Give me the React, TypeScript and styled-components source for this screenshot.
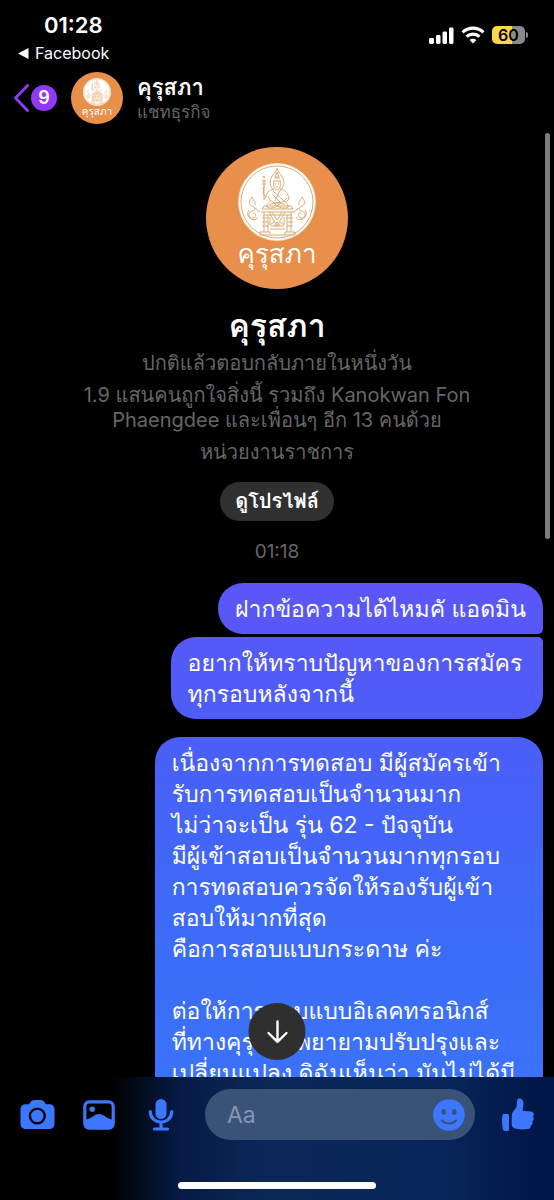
import React from 'react';
import styled, { createGlobalStyle, css } from 'styled-components';

const blue = '#3c78ff';
const muted = '#666666';

const GlobalStyle = createGlobalStyle`
  * { box-sizing: border-box; }
  body {
    margin: 0;
    background: #000;
    color: #fff;
    font-family: Inter, "Loma", sans-serif;
  }
  button { font: inherit; color: inherit; border: 0; padding: 0; background: none; cursor: pointer; }
  h1, h2, p { margin: 0; font-weight: 400; }
  svg { display: block; }
`;

const Screen = styled.div`
  display: flex;
  flex-direction: column;
  height: 100vh;
  overflow: hidden;
`;

const StatusBar = styled.div`
  display: flex;
  justify-content: space-between;
  flex: none;
  height: 66px;
  padding: 11px 26px 0 18px;
`;

const StatusLeft = styled.div`
  display: flex;
  flex-direction: column;
`;

const Time = styled.time`
  padding-left: 26px;
  font-size: 22px;
  line-height: 28px;
  font-weight: 600;
`;

const BackToApp = styled.a`
  display: flex;
  align-items: center;
  gap: 6px;
  color: #fff;
  font-size: 16px;
  line-height: 28px;
  font-weight: 400;
  text-decoration: none;
`;

const StatusIcons = styled.div`
  display: flex;
  align-items: center;
  gap: 7px;
  height: 48px;
`;

const Battery = styled.div`
  display: flex;
  align-items: center;
  gap: 1px;
`;

const BatteryBody = styled.div`
  width: 33px;
  height: 18px;
  border-radius: 5px;
  background: linear-gradient(90deg, #fdd64b 60%, #8a8a8c 60%);
  color: #000;
  font-size: 16px;
  line-height: 18px;
  font-weight: 600;
  text-align: center;
`;

const BatteryTip = styled.div`
  width: 2px;
  height: 6px;
  border-radius: 0 2px 2px 0;
  background: #8a8a8c;
`;

const Header = styled.header`
  display: flex;
  align-items: center;
  flex: none;
  height: 67px;
  padding: 0 14px 3px;
`;

const BackButton = styled.button`
  display: flex;
  align-items: center;
  gap: 2px;
  width: 57px;
`;

const Unread = styled.span`
  width: 26px;
  height: 26px;
  border-radius: 50%;
  background: #9138fa;
  font-size: 18px;
  line-height: 26px;
  font-weight: 600;
  text-align: center;
`;

const Avatar = styled.div<{ $large?: boolean }>`
  display: flex;
  flex-direction: column;
  align-items: center;
  flex: none;
  width: 52px;
  height: 52px;
  padding-top: 6px;
  border-radius: 50%;
  background: #e78f4b;
  font-size: 10px;
  line-height: 11px;
  svg { width: 28px; height: 28px; }
  ${({ $large }) => $large && css`
    width: 142px;
    height: 142px;
    padding-top: 16px;
    font-size: 26px;
    line-height: 26px;
    svg { width: 78px; height: 78px; }
  `}
`;

const HeaderText = styled.div`
  margin-left: 14px;
  padding-top: 2px;
`;

const HeaderName = styled.h1`
  font-size: 22px;
  line-height: 26px;
  font-weight: 600;
`;

const HeaderNote = styled.p`
  color: ${muted};
  font-size: 17px;
  line-height: 24px;
`;

const Conversation = styled.main`
  position: relative;
  flex: 1;
  min-height: 0;
  overflow: hidden;
  padding: 14px 11px 0;
`;

const ScrollThumb = styled.div`
  position: absolute;
  top: 0;
  right: 4px;
  width: 5px;
  height: 43%;
  border-radius: 3px;
  background: #7d7d7d;
`;

const Profile = styled.section`
  display: flex;
  flex-direction: column;
  align-items: center;
  text-align: center;
`;

const ProfileName = styled.h2`
  margin: 16px 0 4px;
  font-size: 32px;
  line-height: 42px;
  font-weight: 700;
`;

const Details = styled.div`
  display: flex;
  flex-direction: column;
  gap: 7px;
  color: ${muted};
  font-size: 20px;
  line-height: 25px;
  white-space: pre-line;
`;

const ProfileButton = styled.button`
  height: 39px;
  margin-top: 17px;
  padding: 0 15px;
  border-radius: 20px;
  background: #303030;
  font-size: 20px;
  line-height: 39px;
  font-weight: 600;
`;

const Stamp = styled.time`
  margin: 19px 0;
  color: ${muted};
  font-size: 19px;
  line-height: 24px;
`;

const Messages = styled.div`
  display: flex;
  flex-direction: column;
  align-items: flex-end;
  gap: 3px;
`;

const Bubble = styled.p<{ $joins?: 'above' | 'below'; $long?: boolean }>`
  max-width: 73%;
  padding: 11px 17px 9px;
  border-radius: 25px;
  border-top-right-radius: ${({ $joins }) => ($joins === 'above' ? 5 : 25)}px;
  border-bottom-right-radius: ${({ $joins }) => ($joins === 'below' ? 5 : 25)}px;
  background: linear-gradient(#7a4ff4 30%, #5a57f6 50%, #4a5ff7 62%, #3c6cf8 78%, #3b72f8 90%) fixed;
  font-size: 23px;
  line-height: 31px;
  white-space: pre-line;
  ${({ $joins }) => $joins === 'above' && css`
    min-width: 70%;
  `}
  ${({ $long }) => $long && css`
    width: 73%;
    margin-top: 15px;
    padding-bottom: 40px;
  `}
`;

const JumpDown = styled.button`
  position: absolute;
  left: 50%;
  bottom: 17px;
  display: grid;
  place-items: center;
  width: 57px;
  height: 57px;
  border-radius: 50%;
  background: #2f2f2f;
  transform: translateX(-50%);
`;

const Composer = styled.footer`
  flex: none;
  height: 123px;
  padding-top: 12px;
  background: linear-gradient(90deg, #000 20%, #061a45 32%, #0b2858 48%, #08265a 80%, #001748 97%);
`;

const ComposerRow = styled.form`
  display: flex;
  align-items: center;
  height: 51px;
  padding: 0 20px 0 6px;
`;

const IconButton = styled.button`
  display: grid;
  place-items: center;
  flex: none;
  width: 62px;
  height: 48px;
`;

const Field = styled.div`
  display: flex;
  align-items: center;
  flex: 1;
  min-width: 0;
  height: 51px;
  margin: 0 27px 0 13px;
  padding: 0 10px 0 22px;
  border-radius: 26px;
  background: #3a5278;
`;

const TextInput = styled.input`
  flex: 1;
  min-width: 0;
  border: 0;
  padding: 0;
  outline: 0;
  background: none;
  color: #fff;
  font: inherit;
  font-size: 23px;
  line-height: 30px;
  &::placeholder { color: #8796b0; opacity: 1; }
`;

const PlainButton = styled.button`
  flex: none;
`;

const HomeIndicator = styled.div`
  width: 198px;
  height: 7px;
  margin: 42px auto 0;
  border-radius: 4px;
  background: #fff;
`;

const Emblem = () => (
  <svg viewBox="0 0 78 78" fill="none" stroke="#d9a263" strokeWidth="0.9" aria-hidden="true">
    <circle cx="39" cy="39" r="38.5" fill="#fff" stroke="#f8dfbc" />
    <circle cx="39" cy="39" r="36" />
    <path d="M39 5c-1 5-7 8-7 15 0 4 3 6 4 8M39 5c1 5 7 8 7 15 0 4-3 6-4 8" />
    <path d="M39 9l-2 5h4zM36 15h6M35 18h8M36 18c-1 5 0 8 3 9 3-1 4-4 3-9M37 21h1M40 21h1M38 24h2" />
    <path d="M36 26c-5 1-8 4-8 8l-3-4 1-7M42 26c5 1 8 4 9 10l-3 3M35 28l10 9M34 31l8 8M42 27l-5 11M30 33c2 5 5 7 9 7s8-2 10-5" />
    <path d="M26 16v21M24 18h4M24 21h4M25 15l1-2 1 2M28 34l-2 2" />
    <path d="M33 37c-2 3-5 4-4 7 3 2 7 1 10-1 3 2 8 3 11 1 1-3-3-5-5-7M31 42c5-3 11-3 16 0M36 40l3 3 4-3" />
    <path d="M24 46h31M23 49h33M25 52h29M24 46l2-3h27l2 3M26 49v20M30 52v17M49 52v17M53 49v20M22 69h10v3H22zM47 69h10v3H47zM32 66h15M33 63h13M32 72h15" />
    <path d="M31 49l8 14 8-14M34 49l5 8 5-8M32 54v8l4-3M46 54v8l-4-3M36 63l3-4 3 4M24 55h6M24 59h6M24 63h6M49 55h6M49 59h6M49 63h6" />
    <path d="M14 34c-3 4-4 7 0 9 3 1 4 4 1 5-4 0-5 4-3 7 2 2 6 3 8-1M14 34c1 4 4 4 3 8M11 47c-3 4 0 9 4 8 4-1 3-6 0-5M17 45l5 4" />
    <path d="M64 34c3 4 4 7 0 9-3 1-4 4-1 5 4 0 5 4 3 7-2 2-6 3-8-1M64 34c-1 4-4 4-3 8M67 47c3 4 0 9-4 8-4-1-3-6 0-5M61 45l-5 4" />
  </svg>
);

const Signal = () => (
  <svg width="25" height="17" viewBox="0 0 25 17" fill="#fff" aria-hidden="true">
    <rect x="0" y="11" width="5" height="6" rx="1.4" />
    <rect x="7" y="8" width="4.5" height="9" rx="1.4" />
    <rect x="13.5" y="4.5" width="4.5" height="12.5" rx="1.4" />
    <rect x="20" y="0.5" width="4.5" height="16.5" rx="1.4" />
  </svg>
);

const Wifi = () => (
  <svg width="24" height="18" viewBox="0 0 24 18" fill="none" stroke="#fff" strokeWidth="3.2" aria-hidden="true">
    <path d="M1.6 6.3C7.4.8 16.6.8 22.4 6.3" />
    <path d="M5.5 10.6c3.700-3.400 9.300-3.400 13 0" />
    <path d="M12 17.400l-3.400-3.300c1.900-1.800 4.900-1.800 6.800 0z" fill="#fff" stroke="none" />
  </svg>
);

const Camera = () => (
  <svg width="35" height="30" viewBox="0 0 35 30" aria-hidden="true">
    <path fill={blue} d="M10 3c1-2 2.400-3 4.500-3h6C22.600 0 24 1 25 3c.5 1 1 1.300 2 1.300h2c3.500 0 5.500 2 5.500 5.200V23c0 4-2 6-6 6h-22c-4 0-6-2-6-6V9.500c0-3.200 2-5.200 5.500-5.200h2c1 0 1.500-.3 2-1.300z" />
    <circle cx="17.300" cy="16" r="7.400" fill={blue} stroke="#000" strokeWidth="2.300" />
  </svg>
);

const Gallery = () => (
  <svg width="32" height="30" viewBox="0 0 32 30" aria-hidden="true">
    <rect x="1.800" y="1.800" width="28.400" height="26.400" rx="4.500" fill="none" stroke={blue} strokeWidth="3.200" />
    <circle cx="9.200" cy="9.300" r="2.700" fill={blue} />
    <path fill={blue} d="M2 19.500c3 0 5.500-1.400 8.500-3.400 4-2.700 7-2.700 11 0 3 2 5.500 3.400 8.500 3.400V28H2z" />
  </svg>
);

const Mic = () => (
  <svg width="26" height="32" viewBox="0 0 26 32" aria-hidden="true">
    <rect x="7.500" y="0" width="11" height="20" rx="5.500" fill={blue} />
    <path d="M2.300 12.500c0 14 21.400 14 21.400 0M13 23.500V29M6.500 30h13" fill="none" stroke={blue} strokeWidth="3.200" strokeLinecap="round" />
  </svg>
);

const Smile = () => (
  <svg width="32" height="32" viewBox="0 0 32 32" aria-hidden="true">
    <circle cx="16" cy="16" r="15.800" fill={blue} />
    <ellipse cx="10.700" cy="13" rx="2.300" ry="3" fill="#3a5278" />
    <ellipse cx="21.300" cy="13" rx="2.300" ry="3" fill="#3a5278" />
    <path d="M9 21.500c4 4 10 4 14 0" fill="none" stroke="#3a5278" strokeWidth="2.200" strokeLinecap="round" />
  </svg>
);

const ThumbUp = () => (
  <svg width="32" height="34" viewBox="0 0 32 34" fill={blue} aria-hidden="true">
    <path d="M2 16h3.500c1 0 1.500.6 1.500 1.500v14c0 1-.6 1.600-1.500 1.600H3c-1.500 0-2-.8-2.200-2C0 26.500-.2 21.500.5 17.500.7 16.500 1.200 16 2 16z" />
    <path d="M15.500 1.500C16 .3 17.500.2 18.800.8c2.400 1.200 3 3.700 2.500 7-.2 1.800-.6 3-.6 4.200 0 .8.5 1 1.300 1l7 .5c2.700.3 3.700 3 1.900 5 1.300 1.600 1 3.700-.6 4.800.8 1.800.2 3.400-1.500 4.200.2 2-1 3.300-3.300 3.600-4.500.6-10 .5-13-.8-2-.9-2.800-2-2.800-4v-8c0-2 .5-3.500 1.600-5 1.600-2 3-3.300 3.400-5.800.3-2 .2-4.500.8-6z" />
  </svg>
);

const messages: { text: string; joins?: 'above' | 'below'; long?: boolean }[] = [
  { text: 'ฝากข้อความได้ไหมคั แอดมิน', joins: 'below' },
  { text: 'อยากให้ทราบปัญหาของการสมัคร\nทุกรอบหลังจากนี้', joins: 'above' },
  {
    text: [
      'เนื่องจากการทดสอบ มีผู้สมัครเข้า',
      'รับการทดสอบเป็นจำนวนมาก',
      'ไม่ว่าจะเป็น รุ่น 62 - ปัจจุบัน',
      'มีผู้เข้าสอบเป็นจำนวนมากทุกรอบ',
      'การทดสอบควรจัดให้รองรับผู้เข้า',
      'สอบให้มากที่สุด',
      'คือการสอบแบบกระดาษ ค่ะ',
      '',
      'ต่อให้การสอบแบบอิเลคทรอนิกส์',
      'ที่ทางคุรุสภาพยายามปรับปรุงและ',
      'เปลี่ยนแปลง ดิฉันเห็นว่า มันไม่ได้มี',
    ].join('\n'),
    long: true,
  },
];

export default function App() {
  return (
    <>
      <GlobalStyle />
      <Screen>
        <StatusBar>
          <StatusLeft>
            <Time>01:28</Time>
            <BackToApp href="#facebook">
              <svg width="11" height="11" viewBox="0 0 11 11" fill="#fff" aria-hidden="true">
                <path d="M0 5.500L10.500 0v11z" />
              </svg>
              Facebook
            </BackToApp>
          </StatusLeft>
          <StatusIcons>
            <Signal />
            <Wifi />
            <Battery>
              <BatteryBody>60</BatteryBody>
              <BatteryTip />
            </Battery>
          </StatusIcons>
        </StatusBar>
        <Header>
          <BackButton aria-label="Back, 9 unread">
            <svg width="15" height="28" viewBox="0 0 15 28" fill="none" stroke="#9138fa" strokeWidth="2.800" strokeLinecap="round" strokeLinejoin="round" aria-hidden="true">
              <path d="M13.500 1.500L1.500 14l12 12.500" />
            </svg>
            <Unread>9</Unread>
          </BackButton>
          <Avatar>
            <Emblem />
            คุรุสภา
          </Avatar>
          <HeaderText>
            <HeaderName>คุรุสภา</HeaderName>
            <HeaderNote>แชทธุรกิจ</HeaderNote>
          </HeaderText>
        </Header>
        <Conversation>
          <Profile>
            <Avatar $large>
              <Emblem />
              คุรุสภา
            </Avatar>
            <ProfileName>คุรุสภา</ProfileName>
            <Details>
              <p>ปกติแล้วตอบกลับภายในหนึ่งวัน</p>
              <p>{'1.9 แสนคนถูกใจสิ่งนี้ รวมถึง Kanokwan Fon\nPhaengdee และเพื่อนๆ อีก 13 คนด้วย'}</p>
              <p>หน่วยงานราชการ</p>
            </Details>
            <ProfileButton>ดูโปรไฟล์</ProfileButton>
            <Stamp>01:18</Stamp>
          </Profile>
          <Messages>
            {messages.map((m) => (
              <Bubble key={m.text} $joins={m.joins} $long={m.long}>{m.text}</Bubble>
            ))}
          </Messages>
          <ScrollThumb />
          <JumpDown aria-label="Jump to latest">
            <svg width="22" height="24" viewBox="0 0 22 24" fill="none" stroke="#fff" strokeWidth="2.400" strokeLinecap="round" strokeLinejoin="round" aria-hidden="true">
              <path d="M11 1.500v20M2 13l9 8.800 9-8.800" />
            </svg>
          </JumpDown>
        </Conversation>
        <Composer>
          <ComposerRow onSubmit={(e) => e.preventDefault()}>
            <IconButton type="button" aria-label="Camera"><Camera /></IconButton>
            <IconButton type="button" aria-label="Gallery"><Gallery /></IconButton>
            <IconButton type="button" aria-label="Voice message"><Mic /></IconButton>
            <Field>
              <TextInput aria-label="Message" placeholder="Aa" />
              <PlainButton type="button" aria-label="Emoji"><Smile /></PlainButton>
            </Field>
            <PlainButton type="button" aria-label="Like"><ThumbUp /></PlainButton>
          </ComposerRow>
          <HomeIndicator />
        </Composer>
      </Screen>
    </>
  );
}
